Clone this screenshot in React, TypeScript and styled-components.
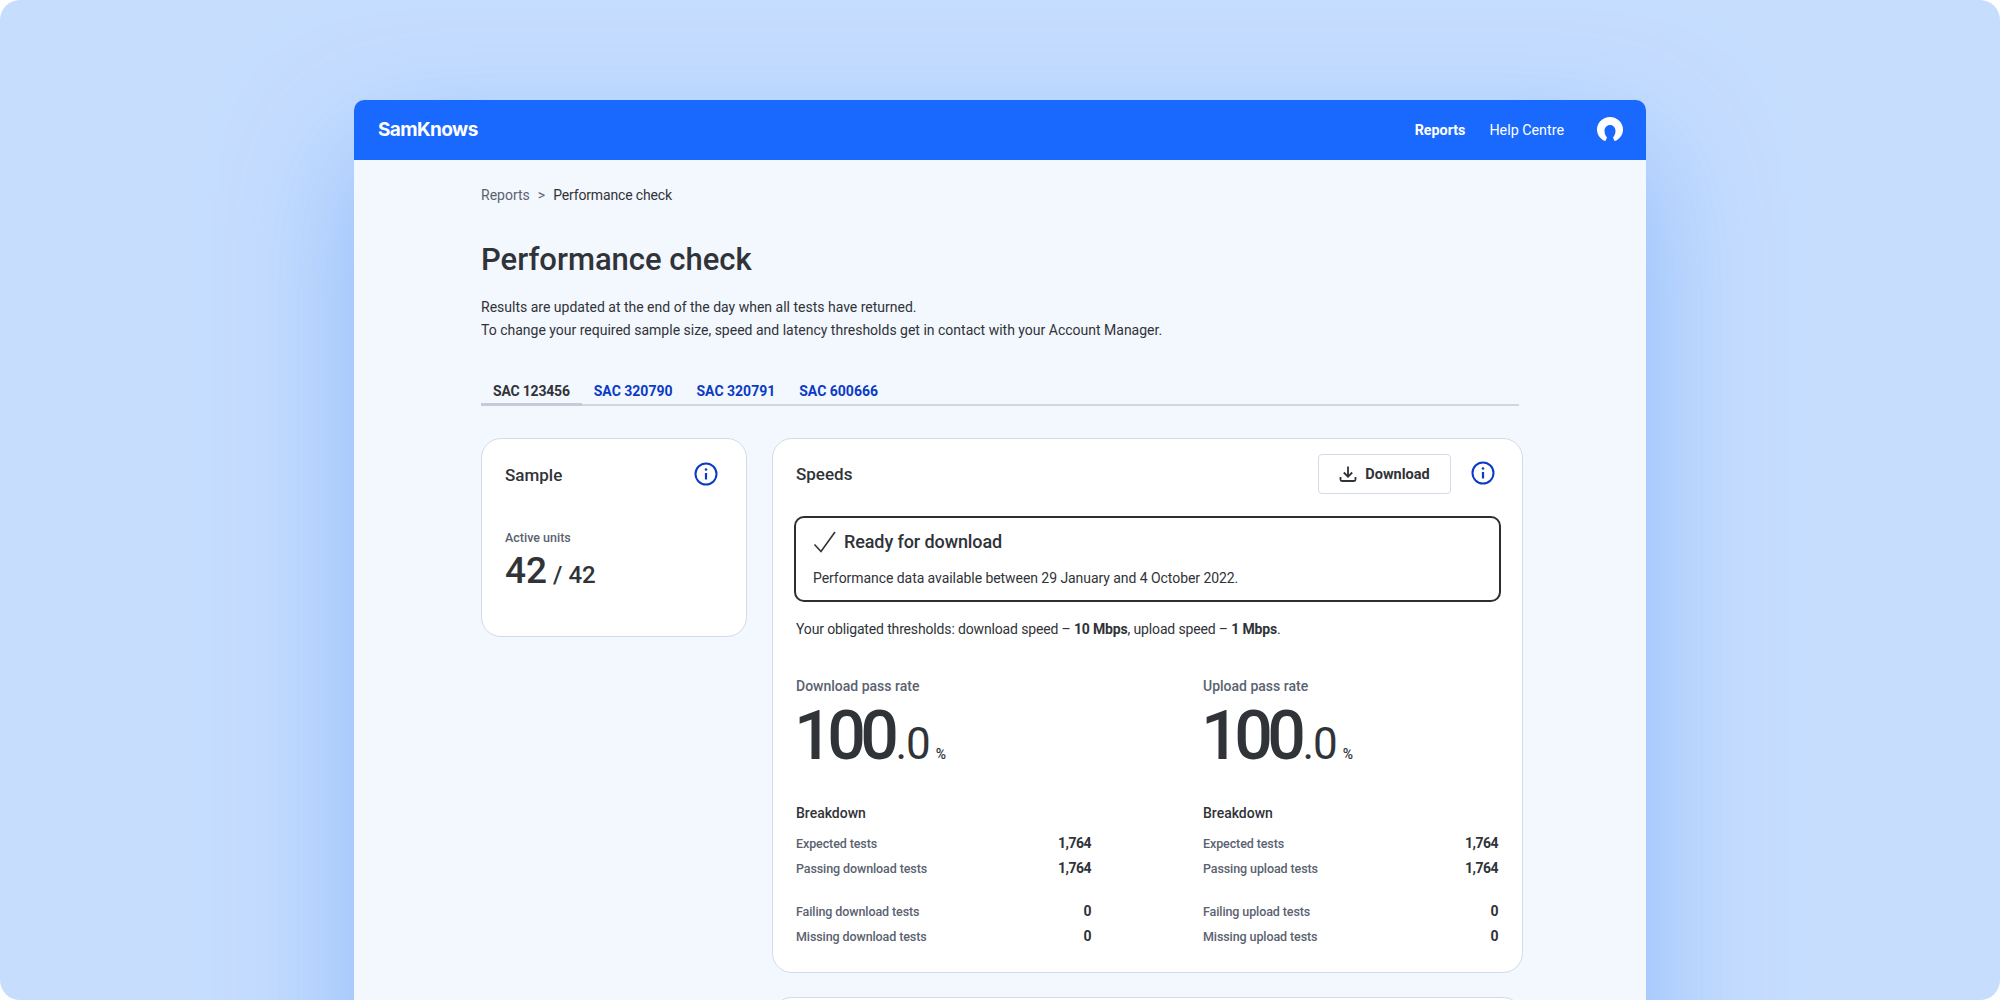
import React from "react";
import styled, {createGlobalStyle} from "styled-components";

const GlobalStyle = createGlobalStyle`
  html, body {
    margin: 0;
    padding: 0;
    background: #fff;
  }

  body {
    font-family: "Roboto", "Liberation Sans", sans-serif;
    color: #303338;
  }
`;

const Stage = styled.div`
  width: 2000px;
  height: 1000px;
  box-sizing: border-box;
  overflow: hidden;
  padding: 100px 354px 0 354px;
  border-radius: 20px;
  background: #c6ddfe;
`;

const Window = styled.div`
  height: 1000px;
  background: #f3f7fe;
  border-radius: 10px 10px 0 0;
  box-shadow: 0 50px 130px 0 rgba(130, 180, 252, 0.85);
`;

const Header = styled.header`
  height: 60px;
  box-sizing: border-box;
  padding: 0 23px 0 24px;
  display: flex;
  align-items: center;
  background: #1a69ff;
  border-radius: 10px 10px 0 0;
  color: #fff;
`;

const Logo = styled.div`
  flex: 1;
  margin-top: -1px;
  font-family: "Inter", "Liberation Sans", sans-serif;
  font-size: 19px;
  font-weight: 700;
  letter-spacing: -0.6px;
`;

const NavItem = styled.a<{ $active?: boolean }>`
  margin-right: 24px;
  font-size: 14.3px;
  font-weight: ${p => (p.$active ? 700 : 400)};
`;

const Avatar = styled.svg`
  width: 26px;
  height: 24px;
  margin: -3px 0 0 9px;
`;

const Content = styled.main`
  width: 1038px;
  margin-left: 127px;
`;

const Breadcrumb = styled.nav`
  padding-top: 26px;
  display: flex;
  gap: 8px;
  font-size: 14px;
  line-height: 18px;
  color: #5a6270;

  strong {
    font-weight: 400;
    letter-spacing: -0.15px;
    color: #303338;
  }
`;

const Title = styled.h1`
  margin: 36px 0 0;
  font-size: 31px;
  line-height: 40px;
  font-weight: 500;
`;

const Lead = styled.p`
  margin: 16px 0 0;
  font-size: 14px;
  line-height: 23px;
`;

const Tabs = styled.div`
  margin-top: 39px;
  display: flex;
  border-bottom: 2px solid #cfd6e2;
`;

const Tab = styled.a<{ $active?: boolean }>`
  position: relative;
  padding: 0 12px 3px;
  font-size: 14px;
  line-height: 20px;
  font-weight: 700;
  letter-spacing: ${p => (p.$active ? "-0.2px" : "0")};
  color: ${p => (p.$active ? "#303338" : "#0b3bc4")};

  ${p => p.$active && `
    &::after {
      content: "";
      position: absolute;
      left: 0;
      right: 0;
      bottom: -2px;
      height: 3px;
      background: #c4ccda;
    }
  `}
`;

const Columns = styled.div`
  margin-top: 32px;
  display: grid;
  grid-template-columns: 266px 751px;
  gap: 25px;
  align-items: start;
`;

const Card = styled.section`
  box-sizing: border-box;
  background: #fff;
  border: 1px solid #d3dbe7;
  border-radius: 20px;
  padding: 16px 22px 0 23px;
`;

const SampleCard = styled(Card)`
  height: 199px;
`;

const SpeedsCard = styled(Card)`
  height: 535px;
  padding: 15px 21px 0 23px;
`;

const NextCard = styled(Card)`
  height: 200px;
  margin-top: 24px;
`;

const CardHead = styled.div`
  height: 40px;
  display: flex;
  align-items: center;
  gap: 20px;
`;

const CardTitle = styled.h2`
  flex: 1;
  margin: 0;
  font-size: 17px;
  font-weight: 500;
`;

const InfoIcon = styled.svg`
  width: 24px;
  height: 24px;
  margin: -2px 6px 0 0;
  flex: none;
`;

const DownloadButton = styled.button`
  width: 133px;
  height: 40px;
  display: flex;
  align-items: center;
  justify-content: center;
  gap: 8px;
  background: #fff;
  border: 1px solid #d3dbe7;
  border-radius: 4px;
  font: 700 14.5px "Roboto", "Liberation Sans", sans-serif;
  color: #303338;
`;

const Caption = styled.div`
  margin-top: 35px;
  font-size: 12.5px;
  line-height: 16px;
  font-weight: 500;
  color: #5a6270;
`;

const UnitsCount = styled.div`
  margin-top: 3px;
  display: flex;
  align-items: baseline;
  gap: 5px;
  font-size: 24px;
  line-height: 44px;
  font-weight: 500;

  b {
    font-size: 37px;
    font-weight: 500;
    margin-right: 1px;
  }
`;

const Alert = styled.div`
  margin: 22px 0 0 -2px;
  height: 86px;
  box-sizing: border-box;
  padding: 10px 17px;
  border: 2px solid #2b2e33;
  border-radius: 10px;
`;

const AlertTitle = styled.div`
  display: flex;
  align-items: center;
  gap: 7px;
  font-size: 18px;
  line-height: 28px;
  font-weight: 500;
  letter-spacing: -0.1px;
`;

const AlertText = styled.div`
  margin-top: 13px;
  font-size: 14px;
  line-height: 18px;
  letter-spacing: -0.06px;
`;

const Thresholds = styled.p`
  margin: 18px 0 0;
  font-size: 14px;
  line-height: 18px;
  letter-spacing: -0.15px;

  b {
    font-weight: 700;
  }
`;

const Results = styled.div`
  margin-top: 38px;
  display: grid;
  grid-template-columns: 295px 295px;
  column-gap: 112px;
`;

const RateLabel = styled.div`
  font-size: 14px;
  line-height: 20px;
  font-weight: 500;
  color: #5a6270;
`;

const Rate = styled.div`
  margin: 4px 0 0 -2px;
  height: 72px;
  display: flex;
  align-items: baseline;
  font-size: 68px;
  line-height: 72px;
  font-weight: 500;
  letter-spacing: -5.5px;

  span {
    margin-left: 2px;
    font-size: 44px;
    font-weight: 400;
    letter-spacing: -1px;
  }

  i {
    margin-left: 6px;
    font-size: 14px;
    font-style: normal;
    letter-spacing: 0;
  }
`;

const BreakdownTitle = styled.div`
  margin: 31px 0 10px;
  font-size: 14px;
  line-height: 20px;
  font-weight: 500;
`;

const Row = styled.div<{ $gap?: boolean }>`
  margin-top: ${p => (p.$gap ? "23px" : "5px")};
  display: flex;
  justify-content: space-between;
  align-items: center;
  height: 20px;
  font-size: 12.5px;
  font-weight: 500;
  letter-spacing: -0.1px;
  color: #5a6270;

  b {
    font-size: 14px;
    font-weight: 700;
    letter-spacing: -0.5px;
    color: #303338;
  }
`;

const Info = () => (
    <InfoIcon viewBox="0 0 24 24" fill="none" stroke="#0b3bc4" strokeWidth="2">
        <circle cx="12" cy="12" r="10.5"/>
        <path d="M12 11v6.5" strokeWidth="2.2"/>
        <circle cx="12" cy="7.5" r="1.3" fill="#0b3bc4" stroke="none"/>
    </InfoIcon>
);

type Result = {
    label: string;
    kind: string;
};

const results: Result[] = [
    {label: "Download pass rate", kind: "download"},
    {label: "Upload pass rate", kind: "upload"},
];

function App() {
    return (
        <Stage>
            <GlobalStyle/>
            <Window>
                <Header>
                    <Logo>SamKnows</Logo>
                    <NavItem $active>Reports</NavItem>
                    <NavItem>Help Centre</NavItem>
                    <Avatar viewBox="0 0 26 24">
                        <path fill="#fff" d="M13 0C5.800 0 0 5.600 0 12.500 0 17.500 2.800 21 6.700 23.500L8.500 24l1.500-3.500C8.700 19.300 7.500 17 7.500 13.800 7.500 10.500 9.900 8 13 8s5.500 2.500 5.500 5.800c0 3.200-1.200 5.500-2.500 6.700l1.500 3.500 1.800-.5C23.200 21 26 17.500 26 12.500 26 5.600 20.200 0 13 0z"/>
                    </Avatar>
                </Header>
                <Content>
                    <Breadcrumb>
                        <span>Reports</span>
                        <span>&gt;</span>
                        <strong>Performance check</strong>
                    </Breadcrumb>
                    <Title>Performance check</Title>
                    <Lead>
                        Results are updated at the end of the day when all tests have returned.<br/>
                        To change your required sample size, speed and latency thresholds get in contact with your Account Manager.
                    </Lead>
                    <Tabs>
                        <Tab $active>SAC 123456</Tab>
                        <Tab>SAC 320790</Tab>
                        <Tab>SAC 320791</Tab>
                        <Tab>SAC 600666</Tab>
                    </Tabs>
                    <Columns>
                        <SampleCard>
                            <CardHead>
                                <CardTitle>Sample</CardTitle>
                                <Info/>
                            </CardHead>
                            <Caption>Active units</Caption>
                            <UnitsCount><b>42</b>/ 42</UnitsCount>
                        </SampleCard>
                        <div>
                            <SpeedsCard>
                                <CardHead>
                                    <CardTitle>Speeds</CardTitle>
                                    <DownloadButton>
                                        <svg width="18" height="18" viewBox="0 0 18 18" fill="none" stroke="#303338" strokeWidth="1.8">
                                            <path d="M9 1.500v10M4.800 7.500 9 11.700l4.200-4.200M1.500 12v2.500a1.500 1.500 0 0 0 1.500 1.500h12a1.500 1.500 0 0 0 1.500-1.500V12"/>
                                        </svg>
                                        Download
                                    </DownloadButton>
                                    <Info/>
                                </CardHead>
                                <Alert>
                                    <AlertTitle>
                                        <svg width="24" height="24" viewBox="0 0 24 24" fill="none" stroke="#303338" strokeWidth="1.600">
                                            <path d="M1.500 14.500 8 21.500 22 2"/>
                                        </svg>
                                        Ready for download
                                    </AlertTitle>
                                    <AlertText>Performance data available between 29 January and 4 October 2022.</AlertText>
                                </Alert>
                                <Thresholds>
                                    Your obligated thresholds: download speed – <b>10 Mbps</b>, upload speed – <b>1 Mbps</b>.
                                </Thresholds>
                                <Results>
                                    {results.map(r => (
                                        <div key={r.kind}>
                                            <RateLabel>{r.label}</RateLabel>
                                            <Rate>100<span>.0</span><i>%</i></Rate>
                                            <BreakdownTitle>Breakdown</BreakdownTitle>
                                            <Row><span>Expected tests</span><b>1,764</b></Row>
                                            <Row><span>Passing {r.kind} tests</span><b>1,764</b></Row>
                                            <Row $gap><span>Failing {r.kind} tests</span><b>0</b></Row>
                                            <Row><span>Missing {r.kind} tests</span><b>0</b></Row>
                                        </div>
                                    ))}
                                </Results>
                            </SpeedsCard>
                            <NextCard/>
                        </div>
                    </Columns>
                </Content>
            </Window>
        </Stage>
    );
}

export default App;
